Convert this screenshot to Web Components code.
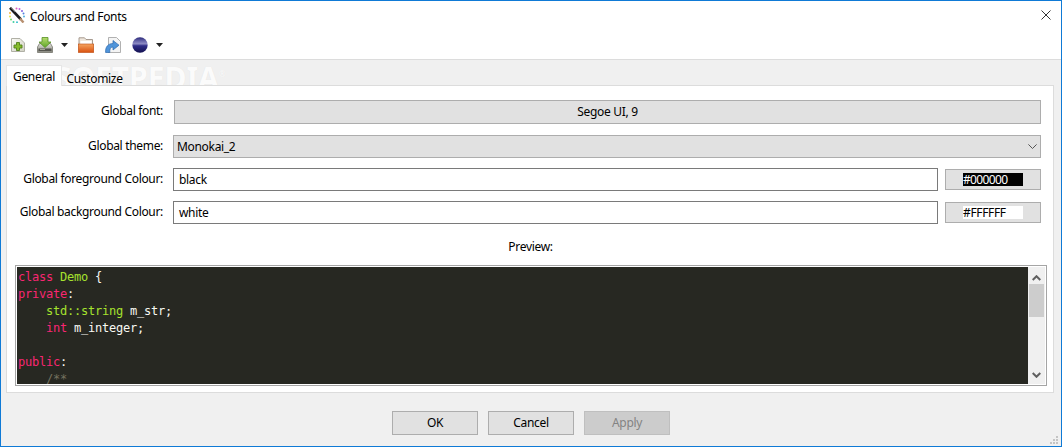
<!DOCTYPE html>
<html><head><meta charset="utf-8">
<style>
html,body{margin:0;padding:0;width:1062px;height:447px;overflow:hidden;background:#f0f0f0}
</style></head><body>
<app-window>
  <title-bar>Colours and Fonts</title-bar>
  <tool-bar></tool-bar>
  <tab-pane>
    <form-row label="Global font:" indent><push-button wide>Segoe UI, 9</push-button></form-row>
    <form-row label="Global theme:" gap="11"><combo-box>Monokai_2</combo-box></form-row>
    <form-row label="Global foreground Colour:" gap="10"><text-field>black</text-field><colour-button bg="#000" fg="#fff" ls="-.65">#000000</colour-button></form-row>
    <form-row label="Global background Colour:" gap="10"><text-field>white</text-field><colour-button bg="#fff" fg="#000" ls="-.35">#FFFFFF</colour-button></form-row>
    <preview-label>Preview:</preview-label>
    <code-editor></code-editor>
  </tab-pane>
  <dialog-buttons></dialog-buttons>
</app-window>
<script>
const UI='"Noto Sans","Open Sans",sans-serif';
function def(name,css,html,init){
  customElements.define(name,class extends HTMLElement{
    constructor(){super();const s=this.attachShadow({mode:'open'});
      s.innerHTML='<style>'+css+'</style>'+(typeof html==='function'?html(this):html);}
    connectedCallback(){if(init)init(this)}
  });
}
def('app-window',`:host{display:flex;flex-direction:column;box-sizing:border-box;width:1062px;height:447px;border:1px solid #0f7ad6;background:#f0f0f0;font:12px/16px ${UI};letter-spacing:-.32px;color:#000;position:relative}
svg{position:absolute;right:2px;bottom:1px}`,
`<slot></slot><svg width="9" height="9" viewBox="0 0 9 9" fill="#c4c4c4"><rect x="6" y="0" width="2" height="2"/><rect x="3" y="3" width="2" height="2"/><rect x="6" y="3" width="2" height="2"/><rect x="0" y="6" width="2" height="2"/><rect x="3" y="6" width="2" height="2"/><rect x="6" y="6" width="2" height="2"/></svg>`);
def('title-bar',`:host{display:flex;align-items:center;box-sizing:border-box;height:31px;background:#fff;padding:1px 0 0 8px;flex:none}
.t{margin-left:5px}.x{margin-left:auto;margin-right:10px;margin-top:-4px;display:block}`,
`<svg width="16" height="16" viewBox="0 0 16 16" style="margin-top:-4px"><circle cx="7.500" cy="1.500" r="1" fill="#e060c0"/><circle cx="10.500" cy="2" r="1" fill="#c060e0"/><circle cx="13" cy="4" r="1" fill="#8060e0"/><circle cx="14.500" cy="6.500" r="1" fill="#5080e0"/><circle cx="15" cy="9.500" r="1" fill="#50b0e0"/><circle cx="1" cy="6" r="1" fill="#f0b040"/><circle cx="1" cy="9.500" r="1" fill="#e8e040"/><circle cx="2" cy="12.500" r="1" fill="#70d860"/><circle cx="4.500" cy="15" r="1" fill="#40d0a0"/><circle cx="8" cy="15.200" r="1" fill="#40c0d0"/><path d="M1 .8L12 12.500" fill="none" stroke="#1c1c1c" stroke-width="2.600"/><path d="M2 1L6 5" stroke="#666" stroke-width="1"/><path d="M11 11.500L14.500 15.500" fill="none" stroke="#b89070" stroke-width="2.400"/></svg><span class="t"><slot></slot></span><svg class="x" width="10" height="10" viewBox="0 0 10 10"><path d="M.5 .5 L9.500 9.500 M9.500 .5 L.5 9.500" stroke="#333" stroke-width="1"/></svg>`);
const arrow=ml=>`<svg style="margin:1px 0 0 ${ml}px" width="7" height="4" viewBox="0 0 7 4"><path d="M0 0H7L3.500 4Z" fill="#222"/></svg>`;
def('tool-bar',`:host{display:flex;align-items:center;box-sizing:border-box;height:28px;background:#fff;border-bottom:1px solid #dcdcdc;flex:none;padding:0 0 2px 10px}
svg{display:block;flex:none}`,
`<svg width="14" height="14" viewBox="0 0 14 14"><defs><linearGradient id="p" x1="0" y1="0" x2="1" y2="1"><stop offset="0" stop-color="#fbfbf6"/><stop offset="1" stop-color="#d0d0c2"/></linearGradient></defs><path d="M.5 .5H9L13.500 5V13.500H.5Z" fill="url(#p)" stroke="#b0b0a6"/><path d="M5.500 4.500H8.500V7H11V10H8.500V12.500H5.500V10H3V7H5.500Z" fill="#86bb2c" stroke="#507f1a" stroke-width=".9"/></svg>
<svg style="margin-left:12px" width="16" height="16" viewBox="0 0 16 16"><defs><linearGradient id="d" x1="0" y1="0" x2="0" y2="1"><stop offset="0" stop-color="#e2e2dc"/><stop offset="1" stop-color="#85857c"/></linearGradient><linearGradient id="g" x1="0" y1="0" x2="0" y2="1"><stop offset="0" stop-color="#b8de70"/><stop offset="1" stop-color="#5fa528"/></linearGradient></defs><path d="M.5 10L2.500 6.500H13.500L15.500 10V15.500H.5Z" fill="url(#d)" stroke="#77776e" stroke-width=".8"/><rect x="1.500" y="11.500" width="13" height="2.500" fill="#55554e"/><rect x="3" y="12" width="5" height="1" fill="#a5a598"/><path d="M5 .5H11V5H14L8 10.500L2 5H5Z" fill="url(#g)" stroke="#558f24" stroke-width=".8"/></svg>${arrow(8)}
<svg style="margin-left:10px" width="16" height="16" viewBox="0 0 16 16"><defs><linearGradient id="f" x1="0" y1="0" x2="0" y2="1"><stop offset="0" stop-color="#f5a561"/><stop offset="1" stop-color="#d9500f"/></linearGradient></defs><path d="M1 .8H6.500L8 2.500H14.500V8H1Z" fill="#efe7dd" stroke="#9d9084" stroke-width=".9"/><rect x="2.500" y="4" width="11" height="4" fill="#fff"/><rect x=".3" y="7" width="15.400" height="8.500" fill="url(#f)" stroke="#bd4c12" stroke-width=".6"/></svg>
<svg style="margin-left:11px" width="16" height="16" viewBox="0 0 16 16"><path d="M3.500 .5H11.500L15.500 4.500V15.500H3.500Z" fill="#f4f4f4" stroke="#a8a8a8" stroke-width=".9"/><path d="M.6 15.500C.2 10 3 6.500 8 6.500V3.500L14 8.200L8 13V10C5.500 10 4.500 12 4.800 15.500Z" fill="#4f94da" stroke="#2d69ad" stroke-width=".7"/></svg>
<svg style="margin-left:11px" width="16" height="16" viewBox="0 0 16 16"><defs><linearGradient id="s" x1="0" y1="0" x2="0" y2="1"><stop offset="0" stop-color="#2a2878"/><stop offset=".25" stop-color="#6a68ac"/><stop offset=".42" stop-color="#8e8cc4"/><stop offset=".55" stop-color="#2f2d88"/><stop offset="1" stop-color="#131150"/></linearGradient></defs><circle cx="8" cy="8" r="7.700" fill="url(#s)"/></svg>${arrow(8)}`);
def('tab-pane',`:host{display:block;flex:none;margin:5px 0 0 5px;width:1048px;position:relative}
.bar{display:flex;height:20px;align-items:stretch;position:relative}
.g{box-sizing:border-box;width:56px;background:#fff;border:1px solid #e6e6e6;border-bottom:0;text-align:center;line-height:21px;position:relative;z-index:1;height:21px}
.c{box-sizing:border-box;width:65px;padding-top:3px;text-align:center;line-height:22px;position:relative;z-index:1}
.w{position:absolute;left:49px;top:-7px;font:700 30px/32px "Noto Sans",sans-serif;letter-spacing:0;color:#fbfbfb;text-shadow:0 0 1px rgba(0,0,0,.07);white-space:nowrap;pointer-events:none}
.w sup{font-size:8px;font-weight:400;vertical-align:12px;letter-spacing:0}
.body{box-sizing:border-box;height:308px;background:#fff;border:1px solid #dcdcdc;padding:14px 8px 0 8px;position:relative}`,
`<div class="bar"><div class="w">SOFTPEDIA<sup>®</sup></div><div class="g">General</div><div class="c">Customize</div></div><div class="body"><slot></slot></div>`);
def('form-row',`:host{display:grid;grid-template-columns:148px 1fr;column-gap:10px;align-items:center;margin-right:4px}
.l{text-align:right;white-space:nowrap;margin:0 0 2px -2px}.f{display:flex;align-items:center;min-width:0}`,
h=>`<div class="l">${h.getAttribute('label')}</div><div class="f" style="${h.hasAttribute('indent')?'padding-left:1px':''}"><slot></slot></div>`,
h=>{h.style.marginTop=(h.getAttribute('gap')||0)+'px'});
def('push-button',`:host{display:flex;align-items:center;justify-content:center;flex:1;box-sizing:border-box;height:24px;background:#e1e1e1;border:1px solid #adadad}`,`<slot></slot>`);
def('combo-box',`:host{display:flex;align-items:center;flex:1;box-sizing:border-box;height:23px;background:#e1e1e1;border:1px solid #adadad;padding-left:3px}
svg{margin-left:auto;margin-right:3px}`,`<slot></slot><svg width="9" height="5" viewBox="0 0 9 5"><path d="M.4 .4L4.500 4.500L8.600 .4" fill="none" stroke="#555" stroke-width="1"/></svg>`);
def('text-field',`:host{display:flex;align-items:center;flex:1;box-sizing:border-box;height:23px;background:#fff;border:1px solid #7a7a7a;padding-left:5px}`,`<slot></slot>`);
def('colour-button',`:host{display:flex;align-items:center;justify-content:center;flex:none;box-sizing:border-box;width:96px;height:21px;margin-left:7px;background:#e1e1e1;border:1px solid #adadad}
.s{width:60px;height:13px;line-height:13px;white-space:nowrap;overflow:hidden}`,
h=>`<div class="s" style="background:${h.getAttribute('bg')};color:${h.getAttribute('fg')};letter-spacing:${h.getAttribute('ls')}px"><slot></slot></div>`);
def('preview-label',`:host{display:block;text-align:center;margin:15px 0 10px;line-height:16px;padding-left:1px}`,`<slot></slot>`);
const K='#f92672',G='#a6e22e',W='#f8f8f2',C='#75715e',Y='#f8f8f2';
const line=(...p)=>'<div class="l">'+(p.length?p.map(([t,c])=>`<span style="color:${c}">${t}</span>`).join(''):'&nbsp;')+'</div>';
def('code-editor',`:host{display:flex;box-sizing:border-box;width:1032px;height:121px;border:1px solid #a5a5a5;padding:1px;background:#fff}
.c{flex:1;background:#272822;overflow:hidden;padding:2px 0 0 1px;font:12px/17px "DejaVu Sans Mono","Liberation Mono",monospace;letter-spacing:-.22px;white-space:pre}
.l{height:17px}
.b{flex:none;width:17px;display:flex;flex-direction:column;align-items:center;background:#f0f0f0}
.t{width:15px;height:33px;background:#cdcdcd}
.b svg{display:block;flex:none}.u{margin-top:8px;margin-bottom:3px}.d{margin-top:auto;margin-bottom:6px}`,
`<div class="c">${line(['class ',K],['Demo ',G],['{',Y])}${line(['private',K],[':',W])}${line(['    ',W],['std::string ',G],['m_str;',W])}${line(['    ',W],['int ',K],['m_integer;',W])}${line()}${line(['public',K],[':',W])}${line(['    /**',C])}</div>
<div class="b"><svg class="u" width="9" height="6" viewBox="0 0 9 6"><path d="M.7 5L4.500 1.200L8.300 5" fill="none" stroke="#606060" stroke-width="2"/></svg><div class="t"></div><svg class="d" width="9" height="6" viewBox="0 0 9 6"><path d="M.7 1L4.500 4.800L8.300 1" fill="none" stroke="#606060" stroke-width="2"/></svg></div>`);
def('dialog-buttons',`:host{display:flex;justify-content:flex-start;gap:10px;padding:18px 0 0 391px}
.b{box-sizing:border-box;width:86px;height:24px;background:#e1e1e1;border:1px solid #adadad;display:flex;align-items:center;justify-content:center}
.x{background:#cccccc;border-color:#bfbfbf;color:#838383}`,
`<div class="b">OK</div><div class="b">Cancel</div><div class="b x">Apply</div>`);
</script>
</body></html>
